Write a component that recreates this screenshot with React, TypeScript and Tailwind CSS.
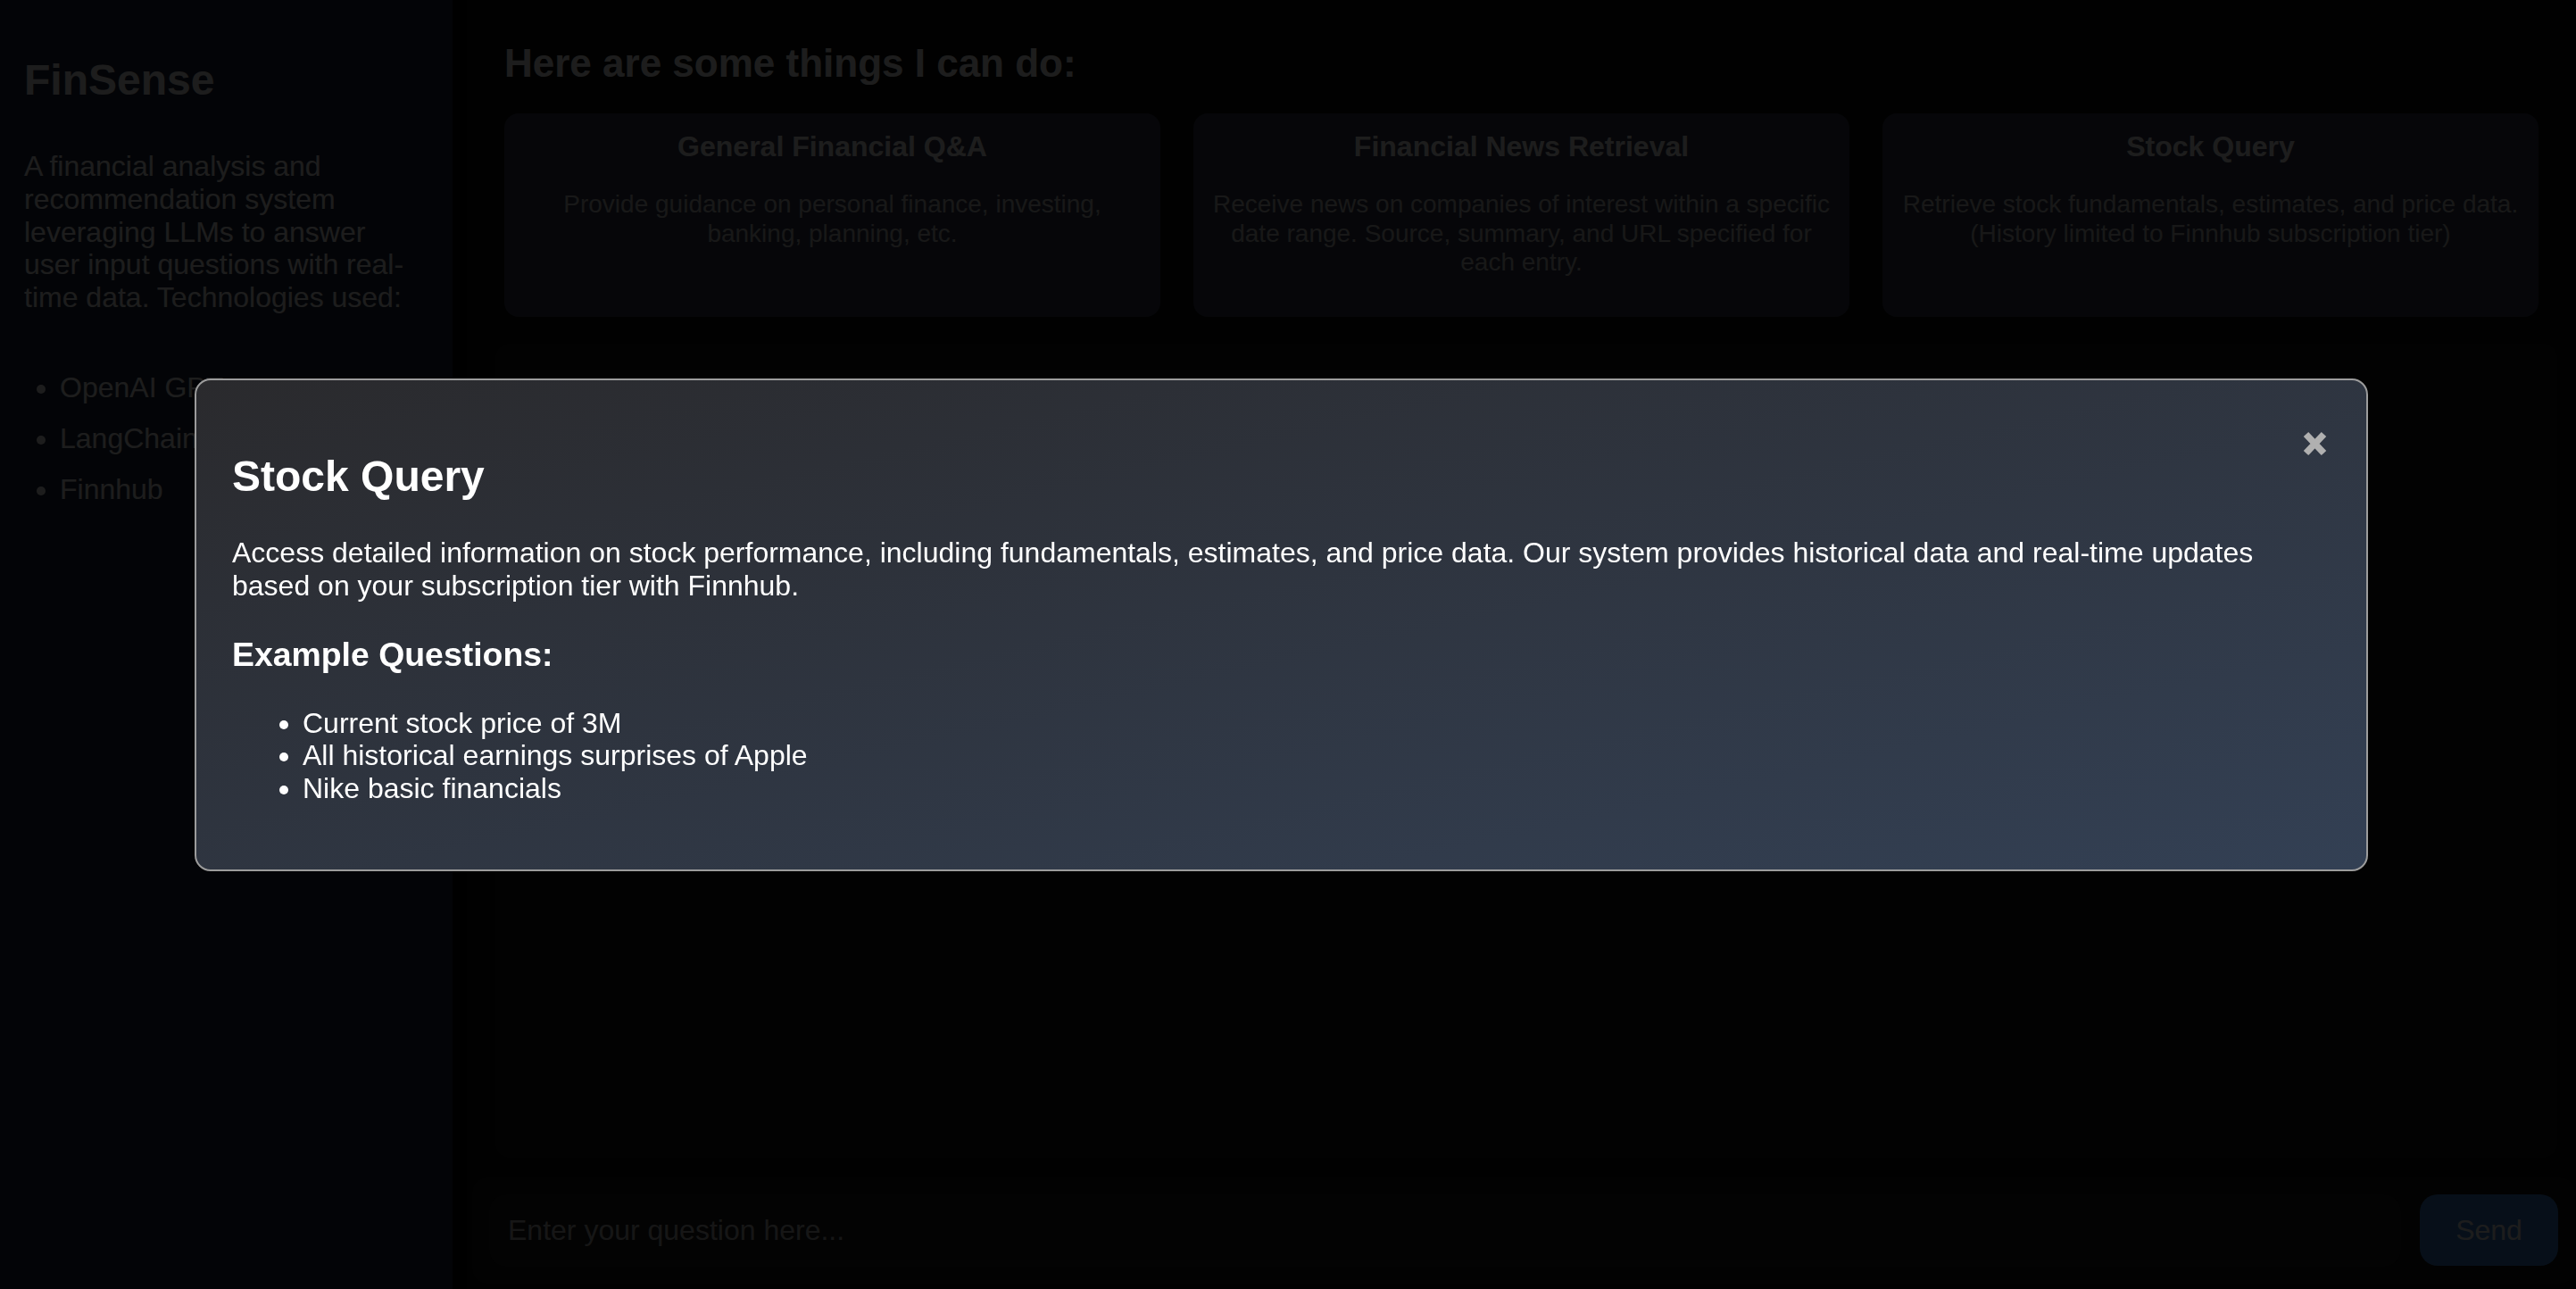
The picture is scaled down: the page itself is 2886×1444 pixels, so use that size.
import React from "react";

const cards = [
  {
    title: "General Financial Q&A",
    desc: "Provide guidance on personal finance, investing, banking, planning, etc.",
  },
  {
    title: "Financial News Retrieval",
    desc: "Receive news on companies of interest within a specific date range. Source, summary, and URL specified for each entry.",
  },
  {
    title: "Stock Query",
    desc: "Retrieve stock fundamentals, estimates, and price data. (History limited to Finnhub subscription tier)",
  },
];

export default function App() {
  return (
    <div className="relative flex h-screen w-full overflow-hidden font-['Liberation_Sans',Arial,sans-serif] text-white">
      {/* Sidebar */}
      <aside className="flex w-[507px] shrink-0 flex-col bg-[#222a3e] pl-[27px] pr-[40px] pt-[62px]">
        <h1 className="text-[48px] font-bold leading-[55px]">FinSense</h1>
        <p className="mt-[51px] text-[32px] leading-[36.8px]">
          A financial analysis and recommendation system leveraging LLMs to answer user input questions with real-time data. Technologies used:
        </p>
        <ul className="mt-[64px] list-disc pl-[40px] text-[32px] leading-[36.8px]">
          <li>OpenAI GPT</li>
          <li className="mt-[20px]">LangChain</li>
          <li className="mt-[20px]">Finnhub</li>
        </ul>
      </aside>
      <div className="w-[16px] shrink-0 bg-[#000000]" />

      {/* Main */}
      <main className="flex min-w-0 flex-1 flex-col bg-[#0b0b0b] pb-[6px]">
        <section className="px-[42px] pt-[46px]">
          <h2 className="text-[44px] font-bold leading-[50.6px]">Here are some things I can do:</h2>
          <div className="mt-[30px] grid grid-cols-3 gap-[37px]">
            {cards.map((c) => (
              <div key={c.title} className="h-[228px] rounded-[16px] bg-[#343a4e] px-[20px] pt-[19px] text-center">
                <h3 className="text-[32px] font-bold leading-[36.8px]">{c.title}</h3>
                <p className="mt-[31px] text-[28px] leading-[32.2px] text-[#d0d0d0]">{c.desc}</p>
              </div>
            ))}
          </div>
        </section>
        <div className="ml-[32px] mr-[21px] mt-[30px] flex-1 rounded-[16px] bg-[#151515]" />
        <div className="ml-[6px] mr-[1px] mt-[22px] flex gap-[21px] rounded-[16px] bg-[#121212] px-[19px] py-[19px]">
          <input
            className="h-[81px] flex-1 rounded-[20px] bg-[#1c1c1c] px-[21px] text-[32px] text-white outline-none placeholder:text-[#c4c4c4]"
            placeholder="Enter your question here..."
          />
          <button className="h-[80px] w-[155px] rounded-[20px] bg-[#3f86d6] text-[32px] text-white">Send</button>
        </div>
      </main>

      {/* Overlay + modal */}
      <div className="fixed inset-0 flex items-center justify-center bg-black/[0.885] pb-[44px] pr-[15px]">
        <div className="relative w-[2435px] rounded-[18px] border-2 border-[#9c9c9c] bg-[linear-gradient(to_bottom_right,#2a2a2d,#334054)] px-[40px] pb-[72px] pt-[80px] text-white">
          <button className="absolute right-[44px] top-[57px] h-[28px] w-[27px]" aria-label="Close">
            <svg width="27" height="28" viewBox="0 0 27 28">
              <path d="M3.5 3.5 L23.5 24.5 M23.5 3.5 L3.5 24.5" stroke="#b0b0b0" strokeWidth="7.5" strokeLinecap="butt" fill="none" />
            </svg>
          </button>
          <h2 className="text-[48px] font-bold leading-[55px]">Stock Query</h2>
          <p className="mt-[40px] text-[32px] leading-[36.8px]">
            Access detailed information on stock performance, including fundamentals, estimates, and price data. Our system provides historical data and real-time updates based on your subscription tier with Finnhub.
          </p>
          <h3 className="mt-[37px] text-[37.4px] font-bold leading-[43px]">Example Questions:</h3>
          <ul className="mt-[37px] list-disc pl-[79px] text-[32px] leading-[36.8px]">
            <li>Current stock price of 3M</li>
            <li>All historical earnings surprises of Apple</li>
            <li>Nike basic financials</li>
          </ul>
        </div>
      </div>
    </div>
  );
}
